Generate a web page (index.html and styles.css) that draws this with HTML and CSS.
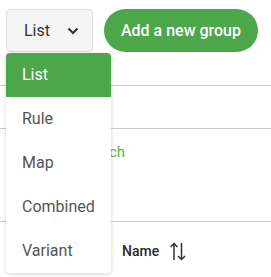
FILE: index.html
```html
<!DOCTYPE html>
<html lang="en">
<head>
  <meta charset="UTF-8">
  <title>Groups</title>
  <link rel="stylesheet" href="styles.css">
</head>
<body>

<div class="toolbar">
  <div class="picker">
    <button class="select">List
      <svg class="chevron" width="12" height="8" viewBox="0 0 12 8"><path d="M1.5 1.5 L6 6 L10.5 1.5" fill="none" stroke="#333" stroke-width="2"/></svg>
    </button>
    <ul class="menu">
      <li class="active">List</li>
      <li>Rule</li>
      <li>Map</li>
      <li>Combined</li>
      <li>Variant</li>
    </ul>
  </div>
  <button class="add">Add a new group</button>
</div>

<div class="content">
  <div class="row first"></div>
  <div class="row second"></div>
  <div class="row search">
    <a class="link" href="#">Search</a>
  </div>
  <div class="row head">
    <span class="col">Name</span>
    <svg class="sort" width="18" height="19" viewBox="0 0 18 19"><path d="M5 18 V1.5 M1.5 5 L5 1.5 L8.5 5" fill="none" stroke="#2a3340" stroke-width="1.5"/><path d="M12.5 1 V17.5 M9 14 L12.5 17.5 L16 14" fill="none" stroke="#2a3340" stroke-width="1.5"/></svg>
  </div>
</div>

</body>
</html>
```

FILE: styles.css
```css
body {
  font-family: 'Roboto', sans-serif;
  background-color: #fff;
  color: #333;
  margin: 0;
}

.toolbar {
  display: flex;
  gap: 11px;
  padding: 9px 6px 0;
}

.picker {
  position: relative;
}

.select {
  display: flex;
  align-items: center;
  gap: 17px;
  width: 87px;
  height: 43px;
  padding: 0 0 0 17px;
  background-color: #f5f5f5;
  border: 1px solid #ddd;
  border-radius: 4px;
  font-family: 'Roboto', sans-serif;
  font-size: 16px;
  color: #333;
}

.add {
  height: 43px;
  width: 154px;
  border: none;
  border-radius: 22px;
  background-color: #4ca64a;
  color: #fff;
  font-family: 'Roboto', sans-serif;
  font-size: 16px;
  font-weight: 500;
}

.menu {
  position: absolute;
  top: 44px;
  left: 0;
  width: 105px;
  margin: 0;
  padding: 0;
  list-style-type: none;
  background-color: #fff;
  border-radius: 4px;
  box-shadow: 0 1px 4px rgba(0, 0, 0, 0.18);
  overflow: hidden;
  z-index: 2;
}

.menu li {
  height: 44px;
  line-height: 44px;
  padding-left: 16px;
  font-size: 16px;
  color: #555;
}

.menu li.active {
  background-color: #4ca64a;
  color: #fff;
}

.row {
  border-bottom: 1px solid #ccc;
}

.first {
  height: 33px;
}

.second {
  height: 42px;
}

.search {
  height: 92px;
  padding-left: 79px;
}

.link {
  display: inline-block;
  margin-top: 14px;
  color: #5cb040;
  font-size: 15px;
  text-decoration: none;
}

.head {
  border-bottom: none;
  display: flex;
  align-items: center;
  gap: 10px;
  height: 58px;
  padding-left: 122px;
}

.col {
  font-size: 14px;
  font-weight: 500;
  color: #2a2a2a;
}
```
